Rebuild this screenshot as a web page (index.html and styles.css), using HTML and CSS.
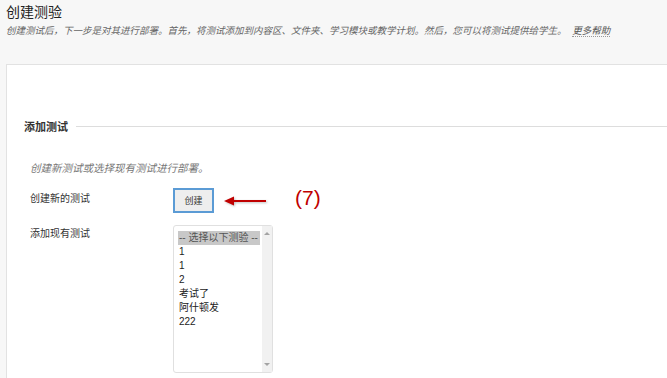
FILE: index.html
```html
<!DOCTYPE html>
<html lang="zh-CN">
<head>
    <meta charset="UTF-8">
    <meta name="viewport" content="width=device-width, initial-scale=1.0">
    <title>创建测验</title>
    <link rel="stylesheet" href="styles.css">
</head>
<body>
    <div class="page-header">
        <h1>创建测验</h1>
        <p class="page-desc">创建测试后，下一步是对其进行部署。首先，将测试添加到内容区、文件夹、学习模块或教学计划。然后，您可以将测试提供给学生。 <a href="#" class="help-link">更多帮助</a></p>
    </div>

    <!-- Main panel -->
    <div class="panel">
        <div class="section-title">
            <span>添加测试</span>
            <div class="section-line"></div>
        </div>

        <p class="section-hint">创建新测试或选择现有测试进行部署。</p>

        <div class="form-row">
            <div class="form-label">创建新的测试</div>
            <div class="form-field create-field">
                <button class="create-btn">创建</button>
                <svg class="arrow" width="44" height="12" viewBox="0 0 44 12">
                    <line x1="8" y1="6" x2="42" y2="6" stroke="#c00000" stroke-width="2"/>
                    <polygon points="0,6 10,1.5 10,10.5" fill="#c00000"/>
                </svg>
                <span class="step-num">(7)</span>
            </div>
        </div>

        <div class="form-row existing-row">
            <div class="form-label existing-label">添加现有测试</div>
            <div class="form-field">
                <div class="listbox">
                    <ul class="options">
                        <li class="selected">-- 选择以下测验 --</li>
                        <li>1</li>
                        <li>1</li>
                        <li>2</li>
                        <li>考试了</li>
                        <li>阿什顿发</li>
                        <li>222</li>
                    </ul>
                    <div class="scrollbar">
                        <span class="scroll-up"></span>
                        <span class="scroll-down"></span>
                    </div>
                </div>
            </div>
        </div>
    </div>
</body>
</html>
```

FILE: styles.css
```css
/* Page base */
body {
    margin: 0;
    background-color: #f7f7f7;
    font-family: "Liberation Sans", "Noto Sans CJK SC", sans-serif;
    color: #333333;
    height: 378px;
    overflow: hidden;
}

.page-header {
    padding: 2px 6px 0 6px;
    height: 62px;
}

h1 {
    margin: 0;
    font-size: 14px;
    font-weight: normal;
    color: #222222;
    line-height: 20px;
}

.page-desc {
    margin: 2px 0 0 0;
    font-size: 9.5px;
    font-style: italic;
    color: #666666;
    line-height: 14px;
}

.help-link {
    color: #555555;
    text-decoration: none;
    border-bottom: 1px dotted #999999;
    margin-left: 3px;
}

/* White panel */
.panel {
    margin-left: 6px;
    background-color: white;
    border-top: 1px solid #e2e2e2;
    border-left: 1px solid #e2e2e2;
    height: 314px;
    box-sizing: border-box;
    padding: 53px 0 0 17px;
}

.section-title {
    display: flex;
    align-items: center;
    gap: 8px;
    font-size: 11px;
    font-weight: bold;
    color: #333333;
}

.section-line {
    flex: 1;
    height: 1px;
    background-color: #dddddd;
}

.section-hint {
    margin: 26px 0 0 6px;
    font-size: 10.5px;
    font-style: italic;
    color: #777777;
}

.form-row {
    display: flex;
    margin-left: 6px;
}

.form-label {
    width: 143px;
    font-size: 10px;
    color: #333333;
    padding-top: 15px;
}

.create-field {
    display: flex;
    align-items: flex-start;
    margin-top: 13px;
}

.create-btn {
    width: 41px;
    height: 25px;
    background-color: #eeeeee;
    border: 2px solid #5b9bd5;
    font-family: "Liberation Sans", "Noto Sans CJK SC", sans-serif;
    font-size: 9px;
    color: #333333;
    padding: 0;
}

.arrow {
    margin: 7px 0 0 10px;
    filter: drop-shadow(1px 1px 1px rgba(0, 0, 0, 0.25));
}

.step-num {
    font-size: 21px;
    color: #c00000;
    margin-left: 27px;
    line-height: 24px;
    margin-top: -2px;
}

.existing-row {
    margin-top: 12px;
}

.existing-label {
    padding-top: 0;
}

/* Fake list box */
.listbox {
    display: flex;
    width: 98px;
    height: 146px;
    border: 1px solid #e0e0e0;
    border-radius: 3px;
}

.options {
    list-style: none;
    margin: 0;
    padding: 5px 0 0 4px;
    flex: 1;
    font-size: 10px;
    line-height: 14px;
    color: #222222;
}

.options li {
    padding-left: 1px;
}

.options .selected {
    background-color: #c8c8c8;
    color: #555555;
    margin-right: 2px;
}

.scrollbar {
    width: 10px;
    background-color: #f1f1f1;
    display: flex;
    flex-direction: column;
    justify-content: space-between;
    align-items: center;
    padding: 6px 0;
}

.scroll-up {
    border-left: 3px solid transparent;
    border-right: 3px solid transparent;
    border-bottom: 3px solid #a3a3a3;
}

.scroll-down {
    border-left: 3px solid transparent;
    border-right: 3px solid transparent;
    border-top: 3px solid #a3a3a3;
}
```
